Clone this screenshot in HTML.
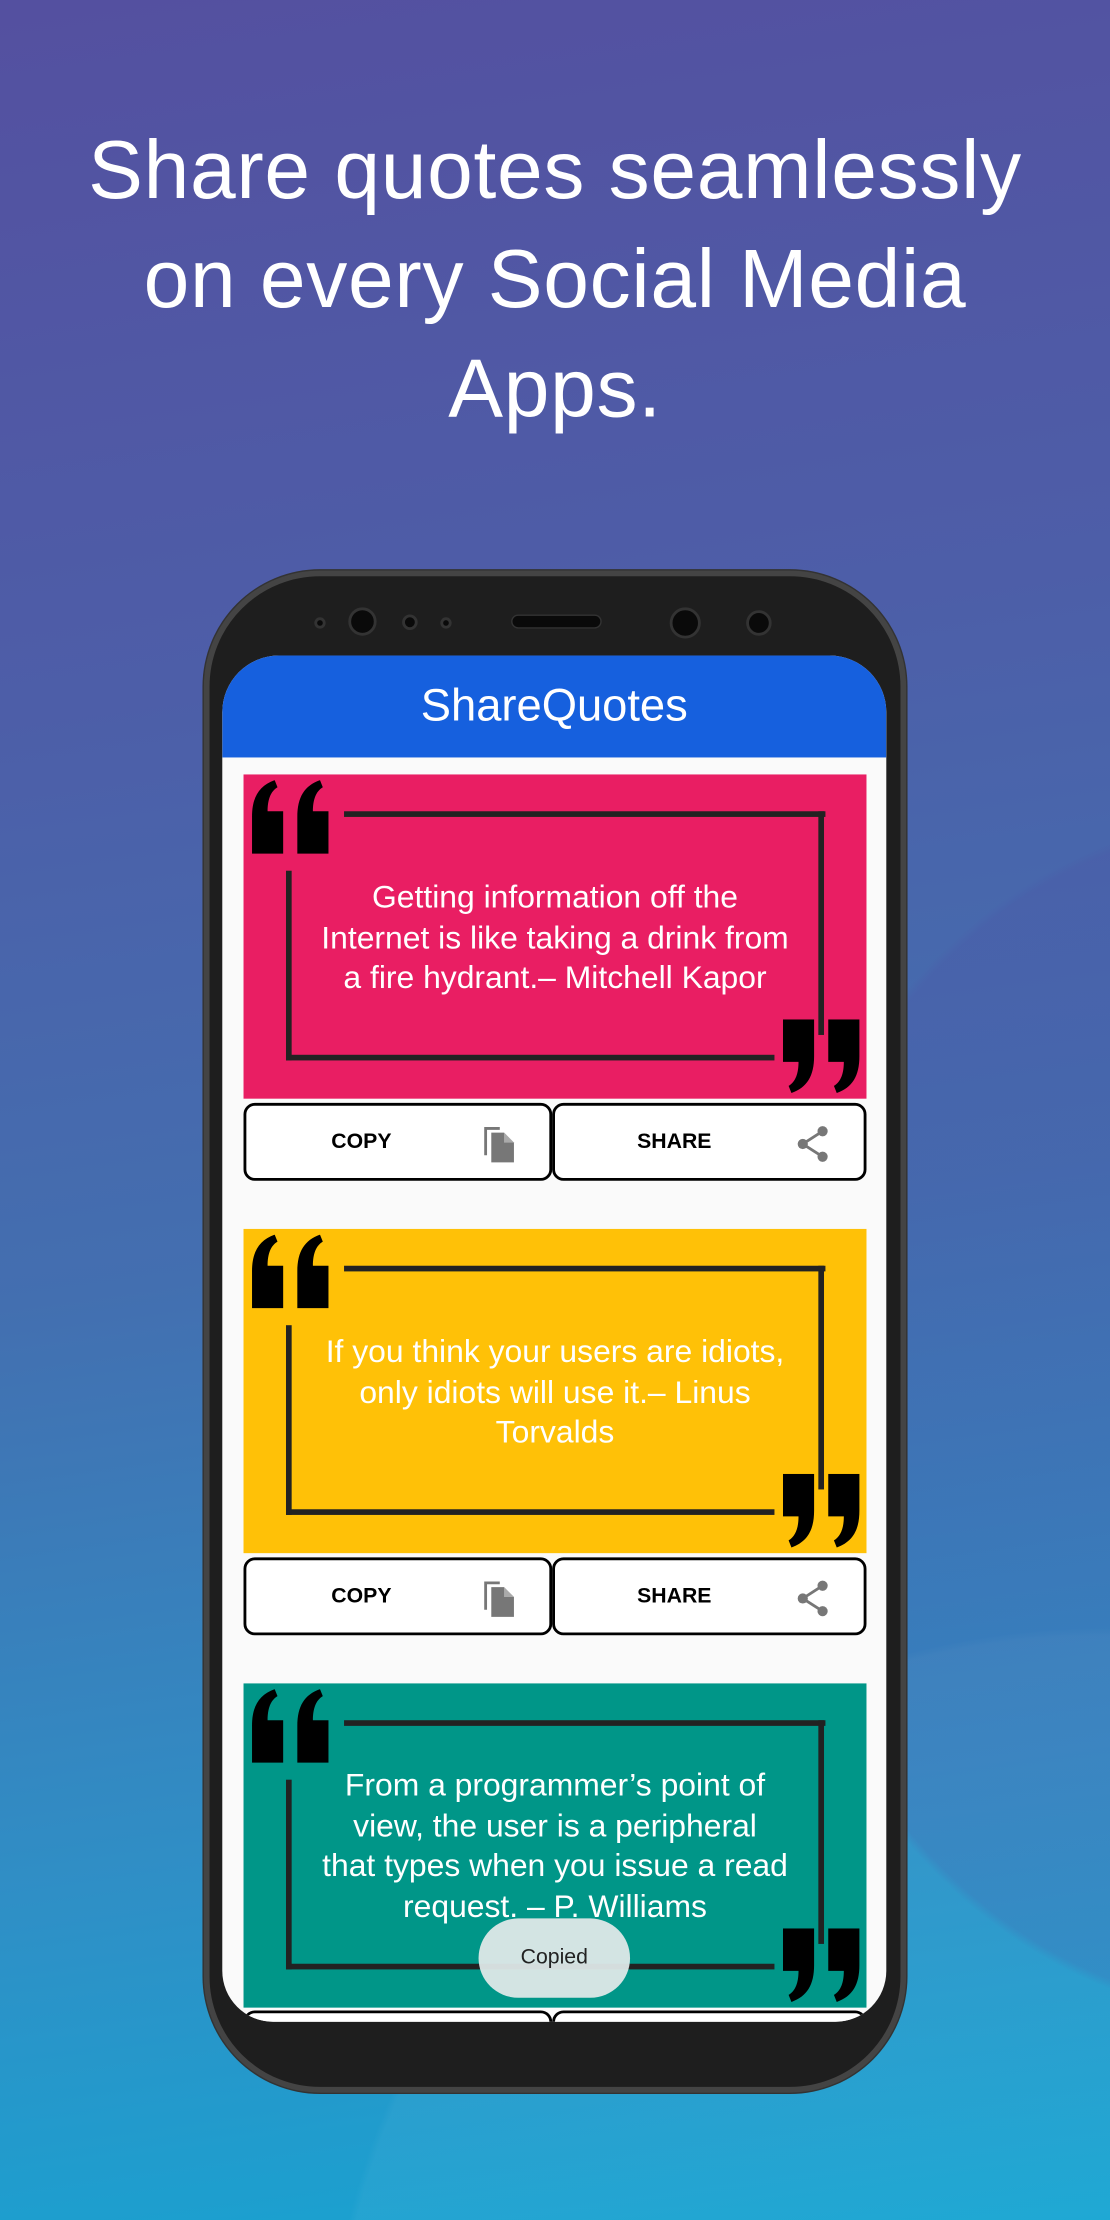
<!DOCTYPE html>
<html><head><meta charset="utf-8"><style>
*{margin:0;padding:0;box-sizing:border-box}
html,body{width:1110px;height:2220px;overflow:hidden}
body{font-family:"Liberation Sans",sans-serif}
#w{position:absolute;left:0;top:0;width:784px;height:1568px;transform:scale(1.41582);transform-origin:0 0;overflow:hidden;
background:radial-gradient(ellipse 600px 700px at 900px 1000px,rgba(80,70,160,.18) 60%,transparent 61%),radial-gradient(circle 550px at 780px 1700px,rgba(255,255,255,.04) 99%,transparent 100%),linear-gradient(172deg,#5450a0 0%,#4d5ea8 30%,#436fb0 55%,#2f8fc6 80%,#16a5d2 100%)}
h1{position:absolute;left:0;width:784px;top:82px;text-align:center;color:#fff;font-weight:normal;font-size:58px;line-height:77px;letter-spacing:0.5px}
.phone{position:absolute;left:144px;top:403px;width:496px;height:1075px;border-radius:82px;background:#1e1e1e;border:4px solid #444;box-shadow:0 0 0 1px #333}
.dot{position:absolute;border-radius:50%;background:#0a0a0a;border:2px solid #333}
.screen{position:absolute;left:157px;top:463px;width:469px;height:965px;border-radius:40px 40px 36px 36px;background:#fafafa;overflow:hidden}
.bar{height:72px;background:#1660de;color:#fff;font-size:32px;text-align:center;line-height:70px}
.card{position:absolute;left:15px;width:440px;height:229px;overflow:hidden}
.ln{position:absolute;background:#222}
.q{position:absolute}
.txt{position:absolute;left:10px;width:420px;text-align:center;color:#fff;font-size:22.5px;line-height:28.5px;letter-spacing:0;white-space:nowrap}
.btn{position:absolute;height:55px;border:2px solid #000;border-radius:8px;background:#fff;font-weight:bold;font-size:15px;line-height:51px}
.toast{position:absolute;left:181px;top:892px;width:107px;height:56px;border-radius:28px;background:rgba(222,232,232,.95);text-align:center;line-height:56px;font-size:15px;color:#222}
</style></head><body><div id="w">
<h1>Share quotes seamlessly<br>on every Social Media<br>Apps.</h1>
<div class="phone">
<div class="dot" style="left:74px;top:29px;width:8px;height:8px"></div>
<div class="dot" style="left:98px;top:22px;width:20px;height:20px"></div>
<div class="dot" style="left:136px;top:27px;width:11px;height:11px"></div>
<div class="dot" style="left:163px;top:29px;width:8px;height:8px"></div>
<div style="position:absolute;left:213px;top:27px;width:64px;height:10px;border-radius:5px;background:#0a0a0a;border:1px solid #333"></div>
<div class="dot" style="left:325px;top:22px;width:22px;height:22px"></div>
<div class="dot" style="left:379px;top:24px;width:18px;height:18px"></div>
</div>
<div class="screen">
<div class="bar">ShareQuotes</div>

<div class="card" style="top:84px;background:#e91e63">
<div class="ln" style="left:71px;top:26px;width:340px;height:4px"></div>
<div class="ln" style="left:406px;top:26px;width:4px;height:158px"></div>
<div class="ln" style="left:30px;top:68px;width:4px;height:134px"></div>
<div class="ln" style="left:30px;top:198px;width:345px;height:4px"></div>
<svg class="q" style="left:6px;top:4px" width="56" height="52" viewBox="0 0 56 52"><path d="M0 52V26C0 12 5 4 16 0l2 5c-5 3-7 9-7 17h11v30zM32 52V26C32 12 37 4 48 0l2 5c-5 3-7 9-7 17h11v30z" fill="#000"/></svg>
<svg class="q" style="left:381px;top:173px" width="56" height="52" viewBox="0 0 56 52"><path d="M22 0v26c0 14-5 22-16 26l-2-5c5-3 7-9 7-17H0V0zM54 0v26c0 14-5 22-16 26l-2-5c5-3 7-9 7-17H32V0z" fill="#000"/></svg>
<div class="txt" style="top:73px">Getting information off the<br>Internet is like taking a drink from<br>a fire hydrant.– Mitchell Kapor</div>
</div>
<div class="btn" style="left:15px;top:316px;width:218px"><span style="position:absolute;left:60px">COPY</span><svg style="position:absolute;left:166px;top:13px" width="24" height="28" viewBox="0 0 24 28"><path d="M2 2h11v2H4v18H2z" fill="#777"/><path d="M7 6h9l7 7v14H7z" fill="#777"/><path d="M16 6v7h7" fill="#aaa"/></svg></div>
<div class="btn" style="left:233px;top:316px;width:222px"><span style="position:absolute;left:58px">SHARE</span><svg style="position:absolute;left:170px;top:14px" width="24" height="26" viewBox="0 0 24 26"><path d="M19 4L5 13l14 9" stroke="#777" stroke-width="2" fill="none"/><circle cx="19" cy="4" r="3.6" fill="#777"/><circle cx="5" cy="13" r="3.6" fill="#777"/><circle cx="19" cy="22" r="3.6" fill="#777"/></svg></div>

<div class="card" style="top:405px;background:#ffc107">
<div class="ln" style="left:71px;top:26px;width:340px;height:4px"></div>
<div class="ln" style="left:406px;top:26px;width:4px;height:158px"></div>
<div class="ln" style="left:30px;top:68px;width:4px;height:134px"></div>
<div class="ln" style="left:30px;top:198px;width:345px;height:4px"></div>
<svg class="q" style="left:6px;top:4px" width="56" height="52" viewBox="0 0 56 52"><path d="M0 52V26C0 12 5 4 16 0l2 5c-5 3-7 9-7 17h11v30zM32 52V26C32 12 37 4 48 0l2 5c-5 3-7 9-7 17h11v30z" fill="#000"/></svg>
<svg class="q" style="left:381px;top:173px" width="56" height="52" viewBox="0 0 56 52"><path d="M22 0v26c0 14-5 22-16 26l-2-5c5-3 7-9 7-17H0V0zM54 0v26c0 14-5 22-16 26l-2-5c5-3 7-9 7-17H32V0z" fill="#000"/></svg>
<div class="txt" style="top:73px">If you think your users are idiots,<br>only idiots will use it.– Linus<br>Torvalds</div>
</div>
<div class="btn" style="left:15px;top:637px;width:218px"><span style="position:absolute;left:60px">COPY</span><svg style="position:absolute;left:166px;top:13px" width="24" height="28" viewBox="0 0 24 28"><path d="M2 2h11v2H4v18H2z" fill="#777"/><path d="M7 6h9l7 7v14H7z" fill="#777"/><path d="M16 6v7h7" fill="#aaa"/></svg></div>
<div class="btn" style="left:233px;top:637px;width:222px"><span style="position:absolute;left:58px">SHARE</span><svg style="position:absolute;left:170px;top:14px" width="24" height="26" viewBox="0 0 24 26"><path d="M19 4L5 13l14 9" stroke="#777" stroke-width="2" fill="none"/><circle cx="19" cy="4" r="3.6" fill="#777"/><circle cx="5" cy="13" r="3.6" fill="#777"/><circle cx="19" cy="22" r="3.6" fill="#777"/></svg></div>

<div class="card" style="top:726px;background:#009688">
<div class="ln" style="left:71px;top:26px;width:340px;height:4px"></div>
<div class="ln" style="left:406px;top:26px;width:4px;height:158px"></div>
<div class="ln" style="left:30px;top:68px;width:4px;height:134px"></div>
<div class="ln" style="left:30px;top:198px;width:345px;height:4px"></div>
<svg class="q" style="left:6px;top:4px" width="56" height="52" viewBox="0 0 56 52"><path d="M0 52V26C0 12 5 4 16 0l2 5c-5 3-7 9-7 17h11v30zM32 52V26C32 12 37 4 48 0l2 5c-5 3-7 9-7 17h11v30z" fill="#000"/></svg>
<svg class="q" style="left:381px;top:173px" width="56" height="52" viewBox="0 0 56 52"><path d="M22 0v26c0 14-5 22-16 26l-2-5c5-3 7-9 7-17H0V0zM54 0v26c0 14-5 22-16 26l-2-5c5-3 7-9 7-17H32V0z" fill="#000"/></svg>
<div class="txt" style="top:58px">From a programmer’s point of<br>view, the user is a peripheral<br>that types when you issue a read<br>request. – P. Williams</div>
</div>
<div class="btn" style="left:15px;top:957px;width:218px"></div>
<div class="btn" style="left:233px;top:957px;width:222px"></div>
<div class="toast">Copied</div>
</div>
</div></body></html>
